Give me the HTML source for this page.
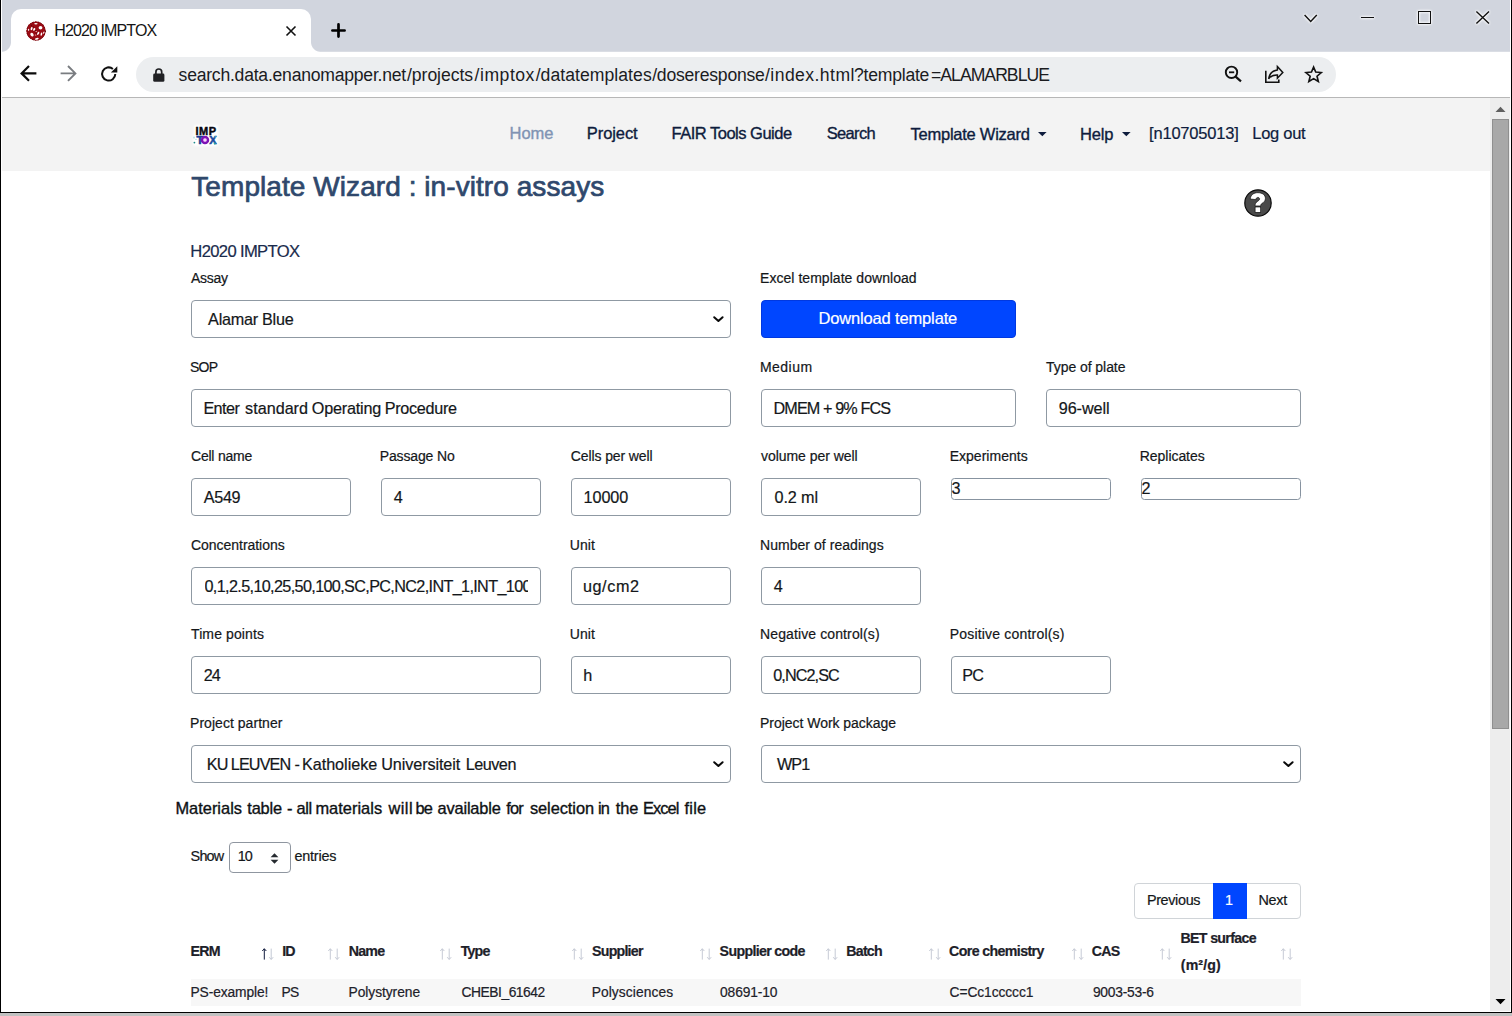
<!DOCTYPE html>
<html lang="en">
<head>
<meta charset="utf-8">
<title>H2020 IMPTOX</title>
<style>
*{box-sizing:border-box;margin:0;padding:0}
html,body{width:1512px;height:1016px;overflow:hidden;background:#fff}
body{font-family:"Liberation Sans",sans-serif;position:relative;color:#212529}
.a{position:absolute}
.t{position:absolute;white-space:nowrap;line-height:1;color:#14171a;-webkit-text-stroke:0.2px currentColor}
svg{position:absolute;overflow:visible}
.glow{filter:drop-shadow(0 0 0.8px #fff) drop-shadow(0 0 0.8px #fff)}
/* browser chrome */
#tabstrip{left:2px;top:0;width:1508px;height:51px;background:#d1d5de}
#tabstrip2{left:2px;top:51px;width:1508px;height:1px;background:#dadde4}
#tab{left:11px;top:9px;width:300px;height:43px;background:#fff;border-radius:10px 10px 0 0}
#tab:before,#tab:after{content:"";position:absolute;bottom:0;width:10px;height:10px}
#tab:before{left:-10px;background:radial-gradient(circle at 0 0,rgba(255,255,255,0) 9.5px,#fff 10.5px)}
#tab:after{right:-10px;background:radial-gradient(circle at 100% 0,rgba(255,255,255,0) 9.5px,#fff 10.5px)}
#urlpill{left:136px;top:57px;width:1200px;height:35px;border-radius:17.5px;background:#eceef0}
#sep{left:2px;top:97px;width:1508px;height:1px;background:#b7b7b7}
#bl{left:0;top:0;width:1px;height:1013px;background:#000}
#br{left:1511px;top:0;width:1px;height:1013px;background:#000}
#bb{left:0;top:1012px;width:1512px;height:1px;background:#000}
#under{left:0;top:1013px;width:1512px;height:3px;background:#c1c1c1}
/* scrollbar */
#sb{left:1490px;top:98px;width:20px;height:913px;background:#ededed}
#thumb{left:1492px;top:119px;width:17px;height:610px;background:#a8a8a8;border:1px solid #8f8f8f}
/* page */
#nav{left:2px;top:98px;width:1488px;height:73px;background:#f3f3f3}
.inp{position:absolute;height:38px;border:1px solid #8f99a3;border-radius:4px;background:#fff}
.small{position:absolute;height:22px;border:1px solid #8793a0;border-radius:3.5px;background:#fff}
#btn{left:761px;top:300px;width:255px;height:38px;border-radius:4px;background:#0046ff;border:1px solid #0038e0}
#row1{left:191px;top:979px;width:1110px;height:27px;background:#f7f7f7}
#pag{left:1134px;top:883px;width:167px;height:36px;border:1px solid #d0d4d8;border-radius:4px;background:#fff}
#pagA{left:1213px;top:883px;width:34px;height:36px;background:#0046ff}
#pagL{left:1247px;top:884px;width:1px;height:34px;background:#d0d4d8}
#len{left:229px;top:842px;width:62px;height:31px;border:1px solid #8f96a0;border-radius:4px;background:#fff}
</style>
</head>
<body>
<!-- ======== browser chrome ======== -->
<div class="a" id="tabstrip"></div><div class="a" id="tabstrip2"></div>
<div class="a" id="tab"></div>
<div class="a" id="urlpill"></div>
<div class="a" id="sep"></div>
<!--CI_START-->
<!-- favicon -->
<svg style="left:26px;top:20.8px" width="20" height="20" viewBox="0 0 20 20">
<circle cx="10" cy="10" r="9.6" fill="#9a0b14"/>
<circle cx="10" cy="10" r="9.2" fill="none" stroke="#6d0208" stroke-width="1" stroke-dasharray="1.6 1.2"/>
<g fill="#fff">
<ellipse cx="14.5" cy="6.8" rx="1.9" ry="1.8"/>
<ellipse cx="5.6" cy="7.6" rx="0.9" ry="1.6" transform="rotate(20 5.6 7.6)"/>
<ellipse cx="8.2" cy="8.4" rx="1" ry="1.5" transform="rotate(25 8.2 8.4)"/>
<ellipse cx="9.9" cy="2.7" rx="1.7" ry="0.7"/>
<ellipse cx="6" cy="13.6" rx="1.5" ry="2" transform="rotate(-35 6 13.6)"/>
<ellipse cx="12.2" cy="12.4" rx="0.9" ry="1.7" transform="rotate(30 12.2 12.4)"/>
<ellipse cx="15.4" cy="13.2" rx="0.8" ry="1.7" transform="rotate(15 15.4 13.2)"/>
<ellipse cx="17.8" cy="11.6" rx="0.6" ry="1.2" transform="rotate(25 17.8 11.6)"/>
<ellipse cx="10.8" cy="17.8" rx="1.9" ry="0.9" transform="rotate(-10 10.8 17.8)"/>
<ellipse cx="2.6" cy="8.8" rx="0.6" ry="1.1"/>
<ellipse cx="10.2" cy="10.6" rx="0.7" ry="0.5" opacity=".8"/>
<ellipse cx="9.6" cy="14" rx="0.8" ry="0.5" opacity=".7"/>
</g>
<g fill="#4a0004"><circle cx="7.4" cy="6.1" r="0.55"/><circle cx="9.4" cy="9.4" r="0.5"/><circle cx="13.2" cy="9.2" r="0.5"/><circle cx="10.2" cy="12.2" r="0.5"/><circle cx="5.4" cy="4.2" r="0.5"/><circle cx="19.4" cy="10.6" r="0.5"/></g>
</svg>
<!-- tab close -->
<svg style="left:286px;top:25.5px" width="10" height="10" viewBox="0 0 10 10"><path d="M0.5 0.5 L9.5 9.5 M9.5 0.5 L0.5 9.5" stroke="#111" stroke-width="1.6" fill="none"/></svg>
<!-- new tab plus -->
<svg style="left:331px;top:23px" width="15" height="15" viewBox="0 0 15 15"><path d="M7.5 1.4 L7.5 13.6 M1.4 7.5 L13.6 7.5" stroke="#000" stroke-width="2.7" stroke-linecap="round" fill="none"/></svg>
<!-- window controls -->
<svg class="glow" style="left:1304px;top:13.5px" width="14" height="9" viewBox="0 0 14 9"><path d="M0.6 1 L6.7 7.4 L12.8 1" stroke="#111" stroke-width="1.5" fill="none"/></svg>
<div class="a glow" style="left:1361px;top:16.6px;width:13.2px;height:1.4px;background:#111"></div>
<div class="a glow" style="left:1417.5px;top:11px;width:13.6px;height:13px;border:1.4px solid #111"></div>
<svg class="glow" style="left:1476px;top:11px" width="13.4" height="13" viewBox="0 0 13.4 13"><path d="M0.4 0.4 L13 12.6 M13 0.4 L0.4 12.6" stroke="#111" stroke-width="1.4" fill="none"/></svg>
<!-- back / forward / reload -->
<svg style="left:20px;top:65.1px" width="17" height="17" viewBox="0 0 17 17"><path d="M16.4 8.4 L2.2 8.4 M9 1 L1.6 8.4 L9 15.8" stroke="#0c0c0c" stroke-width="2.2" fill="none" stroke-linejoin="miter"/></svg>
<svg style="left:60px;top:65.1px" width="17" height="17" viewBox="0 0 17 17"><path d="M0.6 8.4 L14.8 8.4 M8 1 L15.4 8.4 L8 15.8" stroke="#797c80" stroke-width="1.9" fill="none" stroke-linejoin="miter"/></svg>
<svg style="left:100px;top:65px" width="18" height="18" viewBox="0 0 18 18"><path d="M15.3 9.1 A6.6 6.6 0 1 1 12.9 3.9" stroke="#111" stroke-width="2" fill="none"/><path d="M17.3 1.2 L17.3 7.6 L10.9 7.6 Z" fill="#111"/></svg>
<!-- lock -->
<svg style="left:153px;top:67.6px" width="12" height="14" viewBox="0 0 12 14"><rect x="0.2" y="5.6" width="11.2" height="8.2" rx="1.4" fill="#202124"/><path d="M2.9 6 L2.9 3.9 A2.9 2.9 0 0 1 8.7 3.9 L8.7 6" stroke="#202124" stroke-width="1.7" fill="none"/></svg>
<!-- zoom-out icon -->
<svg style="left:1224px;top:65.1px" width="18" height="18" viewBox="0 0 18 18"><circle cx="7.5" cy="7.3" r="5.7" stroke="#111" stroke-width="1.9" fill="none"/><path d="M5 7.3 L10.2 7.3" stroke="#111" stroke-width="1.8"/><path d="M11.6 11.6 L17 16.4" stroke="#111" stroke-width="2.2"/></svg>
<!-- share icon -->
<svg style="left:1264px;top:65px" width="20" height="19" viewBox="0 0 20 19"><path d="M1.8 5.8 L1.8 17.3 L14.8 17.3 L14.8 14.6" stroke="#111" stroke-width="1.6" fill="none"/><path d="M13.4 1.6 L18.8 7.4 L13.4 13.2 L13.4 10 C9.4 9.8 6.6 11 4.6 13.8 C5.4 9 8.2 5.6 13.4 4.9 Z" stroke="#111" stroke-width="1.5" fill="none" stroke-linejoin="miter"/></svg>
<!-- star -->
<svg style="left:1304px;top:65px" width="19" height="18" viewBox="0 0 19 18"><g transform="translate(9.6 9.6) scale(0.93) translate(-9.5 -9.7)"><path d="M9.5 1.6 L11.8 7 L17.7 7.5 L13.2 11.4 L14.6 17.1 L9.5 14 L4.4 17.1 L5.8 11.4 L1.3 7.5 L7.2 7 Z" stroke="#111" stroke-width="1.75" fill="none" stroke-linejoin="miter"/></g></svg>

<!--CI_END-->

<!-- ======== page ======== -->
<div class="a" id="nav"></div>
<!--PAGE_START-->
<!-- logo -->
<svg style="left:188px;top:120px" width="36" height="30" viewBox="0 0 36 30">
<defs><filter id="lg" x="-30%" y="-30%" width="160%" height="160%"><feGaussianBlur stdDeviation="0.9"/></filter></defs>
<g filter="url(#lg)" fill="#fff" stroke="#fff" stroke-width="4.2" stroke-linejoin="round">
<rect x="8" y="7" width="20" height="7.4"/><rect x="7" y="16" width="21" height="8"/></g>
<g font-family="Liberation Sans, sans-serif" font-weight="700">
<text x="7.5" y="14.6" font-size="11" fill="#07070f" stroke="#07070f" stroke-width="0.45" textLength="20.6" lengthAdjust="spacing">IMP</text>
<text x="8.6" y="24.2" font-size="11.2" fill="#1a3a94" stroke="#1a3a94" stroke-width="0.6">T</text>
<text x="21.2" y="24.2" font-size="11.2" fill="#1b4aa0" stroke="#1b4aa0" stroke-width="0.5">X</text>
</g>
<circle cx="17" cy="20" r="3" fill="#fff" stroke="#7d12b4" stroke-width="2.5"/>
<circle cx="17" cy="20" r="1.5" fill="#fff" stroke="#d070e6" stroke-width="0.8"/>
<circle cx="6.4" cy="22.6" r="0.9" fill="#1f8a8a"/>
<circle cx="26.8" cy="23.6" r="1.1" fill="#27a39e"/>
<circle cx="27.2" cy="16.8" r="0.9" fill="#5cc4c0" opacity=".8"/>
<circle cx="6" cy="17.6" r="1.1" fill="#a6dede" opacity=".7"/>
<circle cx="8" cy="19.4" r="0.7" fill="#7fcfd0" opacity=".7"/>
</svg>

<!-- nav carets -->
<svg style="left:1037.7px;top:131.8px" width="8.6" height="4.3" viewBox="0 0 8.6 4.3"><path d="M0 0 L8.6 0 L4.3 4.3 Z" fill="#0e1c3d"/></svg>
<svg style="left:1121.7px;top:131.8px" width="8.6" height="4.3" viewBox="0 0 8.6 4.3"><path d="M0 0 L8.6 0 L4.3 4.3 Z" fill="#0e1c3d"/></svg>

<!-- help icon -->
<svg style="left:1244.3px;top:188.7px" width="28" height="28" viewBox="0 0 28 28"><circle cx="14" cy="14" r="13.2" fill="#4a4a4a" stroke="#0a0a0a" stroke-width="1.2"/>
<path d="M6.3 10 C6.6 6 9.6 3.7 13.9 3.7 C18.4 3.7 21.4 6 21.4 9.4 C21.4 11.9 19.8 13.2 18.2 14.3 C17 15.1 16.7 15.7 16.7 16.9 L11.1 16.9 C11.1 14.6 11.8 13.6 13.5 12.4 C14.9 11.4 15.6 10.8 15.6 9.9 C15.6 9 14.9 8.4 13.9 8.4 C12.7 8.4 12 9.2 11.9 10.6 Z" fill="#fff" stroke="#000" stroke-width="0.6"/>
<rect x="11.1" y="18" width="5.6" height="5.3" fill="#fff" stroke="#000" stroke-width="0.6"/></svg>

<!-- form controls -->
<div class="inp" style="left:191px;top:300px;width:540px"></div>
<div class="a" id="btn"></div>
<div class="inp" style="left:191px;top:389px;width:540px"></div>
<div class="inp" style="left:761px;top:389px;width:255px"></div>
<div class="inp" style="left:1046px;top:389px;width:255px"></div>

<div class="inp" style="left:191px;top:478px;width:160px"></div>
<div class="inp" style="left:381px;top:478px;width:160px"></div>
<div class="inp" style="left:571px;top:478px;width:160px"></div>
<div class="inp" style="left:761px;top:478px;width:160px"></div>
<div class="small" style="left:951px;top:478px;width:160px"></div>
<div class="small" style="left:1141px;top:478px;width:160px"></div>

<div class="inp" style="left:191px;top:567px;width:350px"></div>
<div class="inp" style="left:571px;top:567px;width:160px"></div>
<div class="inp" style="left:761px;top:567px;width:160px"></div>

<div class="inp" style="left:191px;top:656px;width:350px"></div>
<div class="inp" style="left:571px;top:656px;width:160px"></div>
<div class="inp" style="left:761px;top:656px;width:160px"></div>
<div class="inp" style="left:951px;top:656px;width:160px"></div>

<div class="inp" style="left:191px;top:745px;width:540px"></div>
<div class="inp" style="left:761px;top:745px;width:540px"></div>

<!-- select chevrons -->
<svg style="left:712.5px;top:315.5px" width="11" height="7" viewBox="0 0 11 7"><path d="M1.2 1.2 L5.4 5 L9.6 1.2" fill="none" stroke="#0a0a0a" stroke-width="2" stroke-linecap="round" stroke-linejoin="round"/></svg>
<svg style="left:712.5px;top:760.5px" width="11" height="7" viewBox="0 0 11 7"><path d="M1.2 1.2 L5.4 5 L9.6 1.2" fill="none" stroke="#0a0a0a" stroke-width="2" stroke-linecap="round" stroke-linejoin="round"/></svg>
<svg style="left:1282.5px;top:760.5px" width="11" height="7" viewBox="0 0 11 7"><path d="M1.2 1.2 L5.4 5 L9.6 1.2" fill="none" stroke="#0a0a0a" stroke-width="2" stroke-linecap="round" stroke-linejoin="round"/></svg>

<!-- length select -->
<div class="a" id="len"></div>
<svg style="left:270px;top:852.5px" width="9" height="11" viewBox="0 0 9 11"><path d="M0.6 4.3 L4.5 0.3 L8.4 4.3 Z M0.6 6.7 L4.5 10.7 L8.4 6.7 Z" fill="#262b30"/></svg>

<!-- pagination -->
<div class="a" id="pag"></div><div class="a" id="pagA"></div>

<!-- table -->
<div class="a" id="row1"></div>

<!-- sort arrows -->
<svg style="left:261.9px;top:948px" width="12" height="12" viewBox="0 0 12 12"><path d="M2.3 11.6 L2.3 0.9 M0.3 3 L2.3 0.7 L4.3 3" stroke="#101a3c" stroke-width="1" fill="none"/><path d="M9.2 0.6 L9.2 11.3 M7.2 9.2 L9.2 11.5 L11.2 9.2" stroke="#c3c8d4" stroke-width="1" fill="none"/></svg>
<svg style="left:328.2px;top:948px" width="12" height="12" viewBox="0 0 12 12"><path d="M2.3 11.6 L2.3 0.9 M0.3 3 L2.3 0.7 L4.3 3" stroke="#c6cad5" stroke-width="1" fill="none"/><path d="M9.2 0.6 L9.2 11.3 M7.2 9.2 L9.2 11.5 L11.2 9.2" stroke="#c6cad5" stroke-width="1" fill="none"/></svg>
<svg style="left:440.0px;top:948px" width="12" height="12" viewBox="0 0 12 12"><path d="M2.3 11.6 L2.3 0.9 M0.3 3 L2.3 0.7 L4.3 3" stroke="#c6cad5" stroke-width="1" fill="none"/><path d="M9.2 0.6 L9.2 11.3 M7.2 9.2 L9.2 11.5 L11.2 9.2" stroke="#c6cad5" stroke-width="1" fill="none"/></svg>
<svg style="left:571.8px;top:948px" width="12" height="12" viewBox="0 0 12 12"><path d="M2.3 11.6 L2.3 0.9 M0.3 3 L2.3 0.7 L4.3 3" stroke="#c6cad5" stroke-width="1" fill="none"/><path d="M9.2 0.6 L9.2 11.3 M7.2 9.2 L9.2 11.5 L11.2 9.2" stroke="#c6cad5" stroke-width="1" fill="none"/></svg>
<svg style="left:699.6px;top:948px" width="12" height="12" viewBox="0 0 12 12"><path d="M2.3 11.6 L2.3 0.9 M0.3 3 L2.3 0.7 L4.3 3" stroke="#c6cad5" stroke-width="1" fill="none"/><path d="M9.2 0.6 L9.2 11.3 M7.2 9.2 L9.2 11.5 L11.2 9.2" stroke="#c6cad5" stroke-width="1" fill="none"/></svg>
<svg style="left:826.3px;top:948px" width="12" height="12" viewBox="0 0 12 12"><path d="M2.3 11.6 L2.3 0.9 M0.3 3 L2.3 0.7 L4.3 3" stroke="#c6cad5" stroke-width="1" fill="none"/><path d="M9.2 0.6 L9.2 11.3 M7.2 9.2 L9.2 11.5 L11.2 9.2" stroke="#c6cad5" stroke-width="1" fill="none"/></svg>
<svg style="left:928.7px;top:948px" width="12" height="12" viewBox="0 0 12 12"><path d="M2.3 11.6 L2.3 0.9 M0.3 3 L2.3 0.7 L4.3 3" stroke="#c6cad5" stroke-width="1" fill="none"/><path d="M9.2 0.6 L9.2 11.3 M7.2 9.2 L9.2 11.5 L11.2 9.2" stroke="#c6cad5" stroke-width="1" fill="none"/></svg>
<svg style="left:1071.5px;top:948px" width="12" height="12" viewBox="0 0 12 12"><path d="M2.3 11.6 L2.3 0.9 M0.3 3 L2.3 0.7 L4.3 3" stroke="#c6cad5" stroke-width="1" fill="none"/><path d="M9.2 0.6 L9.2 11.3 M7.2 9.2 L9.2 11.5 L11.2 9.2" stroke="#c6cad5" stroke-width="1" fill="none"/></svg>
<svg style="left:1160.0px;top:948px" width="12" height="12" viewBox="0 0 12 12"><path d="M2.3 11.6 L2.3 0.9 M0.3 3 L2.3 0.7 L4.3 3" stroke="#c6cad5" stroke-width="1" fill="none"/><path d="M9.2 0.6 L9.2 11.3 M7.2 9.2 L9.2 11.5 L11.2 9.2" stroke="#c6cad5" stroke-width="1" fill="none"/></svg>
<svg style="left:1280.7px;top:948px" width="12" height="12" viewBox="0 0 12 12"><path d="M2.3 11.6 L2.3 0.9 M0.3 3 L2.3 0.7 L4.3 3" stroke="#c6cad5" stroke-width="1" fill="none"/><path d="M9.2 0.6 L9.2 11.3 M7.2 9.2 L9.2 11.5 L11.2 9.2" stroke="#c6cad5" stroke-width="1" fill="none"/></svg>

<!--PAGE_END-->

<span class="t" style="left:54.21px;top:23px;font-size:16px;letter-spacing:-0.880px;color:#151515;-webkit-text-stroke:0;">H2020 IMPTOX</span>
<span class="t" style="left:178.60px;top:67px;font-size:17.6px;letter-spacing:-0.238px;color:#1b1c1f;-webkit-text-stroke:0;">search.data.enanomapper.net</span>
<span class="t" style="left:407.00px;top:67px;font-size:17.6px;letter-spacing:-0.049px;color:#1b1c1f;-webkit-text-stroke:0;">/projects</span>
<span class="t" style="left:474.60px;top:67px;font-size:17.6px;letter-spacing:0.515px;color:#1b1c1f;-webkit-text-stroke:0;">/imptox</span>
<span class="t" style="left:535.70px;top:67px;font-size:17.6px;letter-spacing:0.045px;color:#1b1c1f;-webkit-text-stroke:0;">/datatemplates</span>
<span class="t" style="left:652.20px;top:67px;font-size:17.6px;letter-spacing:-0.228px;color:#1b1c1f;-webkit-text-stroke:0;">/doseresponse</span>
<span class="t" style="left:765.00px;top:67px;font-size:17.6px;letter-spacing:0.434px;color:#1b1c1f;-webkit-text-stroke:0;">/index.html</span>
<span class="t" style="left:854.00px;top:67px;font-size:17.6px;letter-spacing:-0.235px;color:#1b1c1f;-webkit-text-stroke:0;">?template</span>
<span class="t" style="left:931.00px;top:67px;font-size:17.6px;letter-spacing:-0.965px;color:#1b1c1f;-webkit-text-stroke:0;">=ALAMARBLUE</span>
<span class="t" style="left:509.60px;top:125px;font-size:16.5px;letter-spacing:-0.079px;color:#8093b3;-webkit-text-stroke:0.35px currentColor;">Home</span>
<span class="t" style="left:586.80px;top:125px;font-size:16.5px;letter-spacing:-0.078px;color:#0e1c3d;-webkit-text-stroke:0.35px currentColor;">Project</span>
<span class="t" style="left:671.50px;top:125px;font-size:16.5px;letter-spacing:-0.501px;color:#0e1c3d;-webkit-text-stroke:0.35px currentColor;">FAIR Tools Guide</span>
<span class="t" style="left:826.70px;top:125px;font-size:16.5px;letter-spacing:-0.641px;color:#0e1c3d;-webkit-text-stroke:0.35px currentColor;">Search</span>
<span class="t" style="left:910.60px;top:126px;font-size:16.5px;letter-spacing:-0.257px;color:#0e1c3d;-webkit-text-stroke:0.35px currentColor;">Template Wizard</span>
<span class="t" style="left:1080.10px;top:126px;font-size:16.5px;letter-spacing:-0.186px;color:#0e1c3d;-webkit-text-stroke:0.35px currentColor;">Help</span>
<span class="t" style="left:1149.00px;top:125px;font-size:16.5px;letter-spacing:-0.187px;color:#0e1c3d;">[n10705013]</span>
<span class="t" style="left:1252.30px;top:125px;font-size:16.5px;letter-spacing:-0.278px;color:#0e1c3d;">Log out</span>
<span class="t" style="left:191.30px;top:173px;font-size:28px;letter-spacing:0.066px;color:#2f486c;-webkit-text-stroke:0.7px currentColor;">Template Wizard : in-vitro assays</span>
<span class="t" style="left:190.30px;top:244px;font-size:16.6px;letter-spacing:-0.641px;color:#1a2b4c;">H2020 IMPTOX</span>
<span class="t" style="left:191.00px;top:271px;font-size:14px;letter-spacing:-0.281px;">Assay</span>
<span class="t" style="left:760.00px;top:271px;font-size:14px;letter-spacing:0.043px;">Excel template download</span>
<span class="t" style="left:189.96px;top:360px;font-size:14px;letter-spacing:-0.770px;">SOP</span>
<span class="t" style="left:760.00px;top:360px;font-size:14px;letter-spacing:0.454px;">Medium</span>
<span class="t" style="left:1046.00px;top:360px;font-size:14px;letter-spacing:-0.057px;">Type of plate</span>
<span class="t" style="left:191.00px;top:449px;font-size:14px;letter-spacing:-0.218px;">Cell name</span>
<span class="t" style="left:379.70px;top:449px;font-size:14px;letter-spacing:-0.142px;">Passage No</span>
<span class="t" style="left:570.80px;top:449px;font-size:14px;letter-spacing:-0.111px;">Cells per well</span>
<span class="t" style="left:761.00px;top:449px;font-size:14px;letter-spacing:-0.047px;">volume per well</span>
<span class="t" style="left:949.70px;top:449px;font-size:14px;letter-spacing:0.019px;">Experiments</span>
<span class="t" style="left:1139.80px;top:449px;font-size:14px;letter-spacing:-0.052px;">Replicates</span>
<span class="t" style="left:191.00px;top:538px;font-size:14px;letter-spacing:-0.036px;">Concentrations</span>
<span class="t" style="left:569.80px;top:538px;font-size:14px;letter-spacing:0.064px;">Unit</span>
<span class="t" style="left:760.00px;top:538px;font-size:14px;letter-spacing:0.044px;">Number of readings</span>
<span class="t" style="left:191.00px;top:627px;font-size:14px;letter-spacing:0.116px;">Time points</span>
<span class="t" style="left:569.80px;top:627px;font-size:14px;letter-spacing:0.064px;">Unit</span>
<span class="t" style="left:760.00px;top:627px;font-size:14px;letter-spacing:0.115px;">Negative control(s)</span>
<span class="t" style="left:949.70px;top:627px;font-size:14px;letter-spacing:0.195px;">Positive control(s)</span>
<span class="t" style="left:190.00px;top:716px;font-size:14px;letter-spacing:0.039px;">Project partner</span>
<span class="t" style="left:760.00px;top:716px;font-size:14px;letter-spacing:-0.032px;">Project Work package</span>
<span class="t" style="left:208.10px;top:311px;font-size:16.2px;letter-spacing:-0.257px;">Alamar Blue</span>
<span class="t" style="left:818.40px;top:310px;font-size:16.5px;letter-spacing:-0.148px;color:#fff;">Download template</span>
<span class="t" style="left:203.40px;top:400px;font-size:16.2px;letter-spacing:-0.575px;">Enter</span>
<span class="t" style="left:245.10px;top:400px;font-size:16.2px;letter-spacing:-0.013px;">standard</span>
<span class="t" style="left:311.80px;top:400px;font-size:16.2px;letter-spacing:-0.211px;">Operating</span>
<span class="t" style="left:384.70px;top:400px;font-size:16.2px;letter-spacing:-0.298px;">Procedure</span>
<span class="t" style="left:773.50px;top:400px;font-size:16.2px;letter-spacing:-0.890px;">DMEM + 9% FCS</span>
<span class="t" style="left:1058.70px;top:400px;font-size:16.2px;letter-spacing:-0.064px;">96-well</span>
<span class="t" style="left:203.70px;top:489px;font-size:16.2px;letter-spacing:-0.301px;">A549</span>
<span class="t" style="left:393.85px;top:489px;font-size:16.2px;">4</span>
<span class="t" style="left:583.60px;top:489px;font-size:16.2px;letter-spacing:-0.078px;">10000</span>
<span class="t" style="left:774.50px;top:489px;font-size:16.2px;letter-spacing:-0.117px;">0.2 ml</span>
<span class="t" style="left:951.50px;top:480px;font-size:16.2px;">3</span>
<span class="t" style="left:1141.50px;top:480px;font-size:16.2px;">2</span>
<span class="t" style="left:204.50px;top:578px;font-size:16.2px;letter-spacing:-0.640px;width:323.5px;overflow:hidden;padding-bottom:4px;">0,1,2.5,10,25,50,100,SC,PC,NC2,INT_1,INT_100</span>
<span class="t" style="left:582.90px;top:578px;font-size:16.2px;letter-spacing:0.604px;">ug/cm2</span>
<span class="t" style="left:773.80px;top:578px;font-size:16.2px;">4</span>
<span class="t" style="left:203.69px;top:667px;font-size:16.2px;letter-spacing:-0.891px;">24</span>
<span class="t" style="left:583.15px;top:667px;font-size:16.2px;">h</span>
<span class="t" style="left:773.18px;top:667px;font-size:16.2px;letter-spacing:-0.891px;">0,NC2,SC</span>
<span class="t" style="left:962.30px;top:667px;font-size:16.2px;letter-spacing:-0.891px;">PC</span>
<span class="t" style="left:206.85px;top:756px;font-size:16.2px;letter-spacing:-0.891px;">KU</span>
<span class="t" style="left:230.84px;top:756px;font-size:16.2px;letter-spacing:-0.891px;">LEUVEN</span>
<span class="t" style="left:294.60px;top:756px;font-size:16.2px;">-</span>
<span class="t" style="left:302.00px;top:756px;font-size:16.2px;letter-spacing:-0.044px;">Katholieke</span>
<span class="t" style="left:381.20px;top:756px;font-size:16.2px;letter-spacing:-0.088px;">Universiteit</span>
<span class="t" style="left:465.70px;top:756px;font-size:16.2px;letter-spacing:-0.481px;">Leuven</span>
<span class="t" style="left:776.90px;top:756px;font-size:16.2px;letter-spacing:-0.891px;">WP1</span>
<span class="t" style="left:175.40px;top:800px;font-size:16.4px;letter-spacing:0.013px;color:#0e1114;-webkit-text-stroke:0.35px currentColor;">Materials</span>
<span class="t" style="left:247.30px;top:800px;font-size:16.4px;letter-spacing:-0.207px;color:#0e1114;-webkit-text-stroke:0.35px currentColor;">table</span>
<span class="t" style="left:286.95px;top:800px;font-size:16.4px;color:#0e1114;-webkit-text-stroke:0.35px currentColor;">-</span>
<span class="t" style="left:296.40px;top:800px;font-size:16.4px;letter-spacing:-0.329px;color:#0e1114;-webkit-text-stroke:0.35px currentColor;">all</span>
<span class="t" style="left:315.40px;top:800px;font-size:16.4px;letter-spacing:0.026px;color:#0e1114;-webkit-text-stroke:0.35px currentColor;">materials</span>
<span class="t" style="left:388.40px;top:800px;font-size:16.4px;letter-spacing:0.460px;color:#0e1114;-webkit-text-stroke:0.35px currentColor;">will</span>
<span class="t" style="left:415.54px;top:800px;font-size:16.4px;letter-spacing:-0.902px;color:#0e1114;-webkit-text-stroke:0.35px currentColor;">be</span>
<span class="t" style="left:437.50px;top:800px;font-size:16.4px;letter-spacing:-0.173px;color:#0e1114;-webkit-text-stroke:0.35px currentColor;">available</span>
<span class="t" style="left:506.30px;top:800px;font-size:16.4px;letter-spacing:-0.835px;color:#0e1114;-webkit-text-stroke:0.35px currentColor;">for</span>
<span class="t" style="left:529.90px;top:800px;font-size:16.4px;letter-spacing:-0.059px;color:#0e1114;-webkit-text-stroke:0.35px currentColor;">selection</span>
<span class="t" style="left:597.98px;top:800px;font-size:16.4px;letter-spacing:-0.902px;color:#0e1114;-webkit-text-stroke:0.35px currentColor;">in</span>
<span class="t" style="left:615.70px;top:800px;font-size:16.4px;letter-spacing:-0.035px;color:#0e1114;-webkit-text-stroke:0.35px currentColor;">the</span>
<span class="t" style="left:642.90px;top:800px;font-size:16.4px;letter-spacing:-0.885px;color:#0e1114;-webkit-text-stroke:0.35px currentColor;">Excel</span>
<span class="t" style="left:684.50px;top:800px;font-size:16.4px;letter-spacing:0.254px;color:#0e1114;-webkit-text-stroke:0.35px currentColor;">file</span>
<span class="t" style="left:190.59px;top:849px;font-size:14.4px;letter-spacing:-0.792px;">Show</span>
<span class="t" style="left:237.64px;top:849px;font-size:14.4px;letter-spacing:-0.792px;">10</span>
<span class="t" style="left:294.50px;top:849px;font-size:14.4px;letter-spacing:-0.216px;">entries</span>
<span class="t" style="left:1146.90px;top:893px;font-size:14.4px;letter-spacing:-0.342px;">Previous</span>
<span class="t" style="left:1224.95px;top:893px;font-size:14.4px;color:#fff;">1</span>
<span class="t" style="left:1258.50px;top:893px;font-size:14.4px;letter-spacing:-0.297px;">Next</span>
<span class="t" style="left:190.53px;top:944px;font-size:14.2px;letter-spacing:-0.781px;font-weight:700;color:#1d2129;">ERM</span>
<span class="t" style="left:282.17px;top:944px;font-size:14.2px;letter-spacing:-0.781px;font-weight:700;color:#1d2129;">ID</span>
<span class="t" style="left:348.80px;top:944px;font-size:14.2px;letter-spacing:-0.781px;font-weight:700;color:#1d2129;">Name</span>
<span class="t" style="left:460.64px;top:944px;font-size:14.2px;letter-spacing:-0.781px;font-weight:700;color:#1d2129;">Type</span>
<span class="t" style="left:592.12px;top:944px;font-size:14.2px;letter-spacing:-0.781px;font-weight:700;color:#1d2129;">Supplier</span>
<span class="t" style="left:719.60px;top:944px;font-size:14.2px;letter-spacing:-0.668px;font-weight:700;color:#1d2129;">Supplier code</span>
<span class="t" style="left:846.30px;top:944px;font-size:14.2px;letter-spacing:-0.763px;font-weight:700;color:#1d2129;">Batch</span>
<span class="t" style="left:949.10px;top:944px;font-size:14.2px;letter-spacing:-0.623px;font-weight:700;color:#1d2129;">Core chemistry</span>
<span class="t" style="left:1091.74px;top:944px;font-size:14.2px;letter-spacing:-0.781px;font-weight:700;color:#1d2129;">CAS</span>
<span class="t" style="left:1180.50px;top:931px;font-size:14.2px;letter-spacing:-0.670px;font-weight:700;color:#1d2129;">BET surface</span>
<span class="t" style="left:1180.80px;top:958px;font-size:14.2px;letter-spacing:0.106px;font-weight:700;color:#1d2129;">(m²/g)</span>
<span class="t" style="left:190.50px;top:986px;font-size:13.8px;letter-spacing:-0.105px;color:#1d2129;">PS-example!</span>
<span class="t" style="left:281.48px;top:986px;font-size:13.8px;letter-spacing:-0.759px;color:#1d2129;">PS</span>
<span class="t" style="left:348.50px;top:986px;font-size:13.8px;letter-spacing:-0.051px;color:#1d2129;">Polystyrene</span>
<span class="t" style="left:461.40px;top:986px;font-size:13.8px;letter-spacing:-0.433px;color:#1d2129;">CHEBI_61642</span>
<span class="t" style="left:591.70px;top:986px;font-size:13.8px;letter-spacing:0.080px;color:#1d2129;">Polysciences</span>
<span class="t" style="left:720.10px;top:986px;font-size:13.8px;letter-spacing:-0.148px;color:#1d2129;">08691-10</span>
<span class="t" style="left:949.60px;top:986px;font-size:13.8px;letter-spacing:-0.095px;color:#1d2129;">C=Cc1ccccc1</span>
<span class="t" style="left:1092.90px;top:986px;font-size:13.8px;letter-spacing:-0.228px;color:#1d2129;">9003-53-6</span>

<!-- ======== scrollbar + frame ======== -->
<div class="a" id="sb"></div>
<div class="a" id="thumb"></div>
<svg style="left:1495px;top:106px" width="11" height="7" viewBox="0 0 11 7"><path d="M0.5 6 L5.5 0.8 L10.5 6 Z" fill="#5f5f5f"/></svg>
<svg style="left:1495px;top:998px" width="11" height="7" viewBox="0 0 11 7"><path d="M0.5 1 L5.5 6.2 L10.5 1 Z" fill="#000"/></svg>
<div class="a" id="bl"></div><div class="a" id="br"></div><div class="a" id="bb"></div><div class="a" id="under"></div>
</body>
</html>
